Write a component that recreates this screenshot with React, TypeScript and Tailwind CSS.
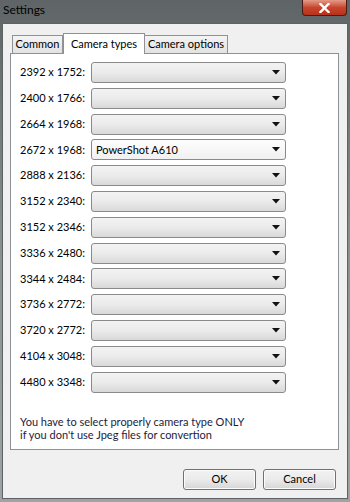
const rows: [string, string][] = [
  ['2392 x 1752:', ''],
  ['2400 x 1766:', ''],
  ['2664 x 1968:', ''],
  ['2672 x 1968:', 'PowerShot A610'],
  ['2888 x 2136:', ''],
  ['3152 x 2340:', ''],
  ['3152 x 2346:', ''],
  ['3336 x 2480:', ''],
  ['3344 x 2484:', ''],
  ['3736 x 2772:', ''],
  ['3720 x 2772:', ''],
  ['4104 x 3048:', ''],
  ['4480 x 3348:', ''],
]

function Arrow() {
  return (
    <svg width="8" height="5" viewBox="0 0 8 5">
      <path d="M0 0h8L4 4.5z" fill="#111" />
    </svg>
  )
}

function Combo({ value }: { value: string }) {
  return (
    <div
      className={
        'flex h-[21px] w-[195px] items-center justify-between rounded-[3px] border border-[#8a8a8a] pl-[4px] pr-[5px] ' +
        (value
          ? 'bg-gradient-to-b from-[#fdfdfd] to-[#f1f1f1]'
          : 'bg-gradient-to-b from-[#f3f3f3] via-[#ebebeb] to-[#d9d9d9]')
      }
    >
      <span className="whitespace-nowrap text-[11px] leading-none text-black">{value}</span>
      <Arrow />
    </div>
  )
}

function Button({ label }: { label: string }) {
  return (
    <div className="flex h-[21px] w-[73px] items-center justify-center rounded-[3px] border border-[#707070] bg-gradient-to-b from-[#f2f2f2] via-[#ebebeb] to-[#d6d6d6] text-[11px] text-black shadow-[inset_0_0_0_1px_#fcfcfc]">
      {label}
    </div>
  )
}

export default function App() {
  return (
    <div
      className="flex h-[502px] w-[350px] flex-col bg-gradient-to-b from-[#5f6466] via-[#8a8f91] to-[#9ea3a5]"
      style={{ fontFamily: 'Lato, "Liberation Sans", sans-serif' }}
    >
      {/* title bar */}
      <div className="flex h-[23px] shrink-0 items-start justify-between pl-[3px] pr-[3px]">
        <span className="pt-[2px] text-[12px] leading-[16px] text-black">Settings</span>
        <div className="flex h-[16px] w-[45px] items-center justify-center rounded-b-[4px] border border-t-0 border-[#4a1b12] bg-gradient-to-b from-[#e29a88] via-[#c8452c] to-[#b8301c]">
          <svg width="11" height="10" viewBox="0 0 11 10">
            <path d="M1.5 1l8 8M9.5 1l-8 8" stroke="#fff" strokeWidth="2.4" strokeLinecap="square" />
          </svg>
        </div>
      </div>

      {/* client area */}
      <div className="mx-[2px] mb-[3px] flex flex-1 flex-col border border-[#5d6264] bg-[#f0f0f0] px-[7px] pt-[8px]">
        {/* tabs */}
        <div className="flex h-[21px] items-end pl-[2px]">
          <div className="flex h-[18px] w-[51px] items-center justify-center whitespace-nowrap border border-b-0 border-[#8e9197] bg-gradient-to-b from-[#f4f4f4] to-[#e2e2e2] text-[11px] text-black">
            Common
          </div>
          <div className="relative z-10 -mb-px flex h-[21px] w-[82px] items-start justify-center whitespace-nowrap border border-b-0 border-[#8e9197] bg-white pt-[2px] text-[11px] text-black">
            Camera types
          </div>
          <div className="flex h-[18px] w-[83px] items-center justify-center whitespace-nowrap border border-b-0 border-l-0 border-[#8e9197] bg-gradient-to-b from-[#f4f4f4] to-[#e2e2e2] text-[11px] text-black">
            Camera options
          </div>
        </div>

        {/* panel */}
        <div className="flex h-[397px] w-[329px] flex-col border border-[#8e9197] bg-white pl-[9px] pt-[8px]">
          <div className="flex flex-col gap-[4.8px]">
            {rows.map(([label, value], i) => (
              <div key={i} className="flex items-center">
                <span className="w-[71px] whitespace-nowrap text-[11px] text-black">{label}</span>
                <Combo value={value} />
              </div>
            ))}
          </div>
          <div className="mt-[22px] text-[11px] leading-[13px] text-[#1c1c3c]">
            <p>You have to select properly camera type ONLY</p>
            <p>if you don't use Jpeg files for convertion</p>
          </div>
        </div>

        {/* buttons */}
        <div className="flex justify-end gap-[7px] pr-[4px] pt-[19px]">
          <Button label="OK" />
          <Button label="Cancel" />
        </div>
      </div>
    </div>
  )
}
